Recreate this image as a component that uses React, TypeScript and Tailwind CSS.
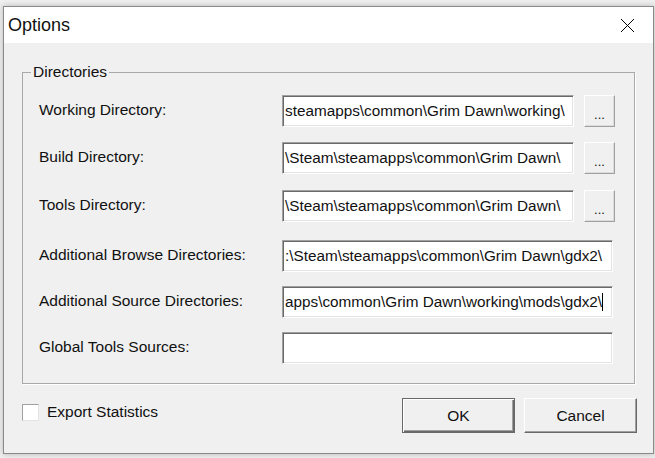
import React from "react";

const rows = [
  { label: "Working Directory:", value: "steamapps\\common\\Grim Dawn\\working\\", browse: true, mt: "mt-[14px]" },
  { label: "Build Directory:", value: "\\Steam\\steamapps\\common\\Grim Dawn\\", browse: true, mt: "mt-[15px]" },
  { label: "Tools Directory:", value: "\\Steam\\steamapps\\common\\Grim Dawn\\", browse: true, mt: "mt-[16px]" },
  { label: "Additional Browse Directories:", value: ":\\Steam\\steamapps\\common\\Grim Dawn\\gdx2\\", browse: false, mt: "mt-[18px]" },
  { label: "Additional Source Directories:", value: "apps\\common\\Grim Dawn\\working\\mods\\gdx2\\", browse: false, mt: "mt-[14px]" },
  { label: "Global Tools Sources:", value: "", browse: false, mt: "mt-[14px]" },
];

const sunken =
  "h-[32px] bg-white border border-t-[#a0a0a0] border-l-[#a0a0a0] border-b-white border-r-white shadow-[inset_1px_1px_0_#696969,inset_-1px_-1px_0_#e3e3e3] overflow-hidden whitespace-nowrap flex items-center pl-[2px] text-[15.3px] text-[#111]";

const App: React.FC = () => {
  return (
    <div className="w-[655px] h-[458px] bg-[#f0f0f0] pt-[6px] pl-[3px] overflow-hidden font-['Liberation_Sans',Arial,sans-serif] text-[#111]">
      <div className="w-[651px] h-[448px] border border-[#8a8a8a] bg-[#f0f0f0] shadow-[0_0_6px_rgba(0,0,0,0.25)] flex flex-col">
        {/* title bar */}
        <div className="h-[36px] bg-white flex items-center justify-between pl-[4px] pr-[18px]">
          <span className="text-[18px] leading-none">Options</span>
          <svg width="15" height="15" viewBox="0 0 15 15" className="mt-[1px]">
            <path d="M1 1 L14 14 M14 1 L1 14" stroke="#000" strokeWidth="1" fill="none" />
          </svg>
        </div>

        <div className="pl-[18px] pr-[18px] pt-[20px]">
          <fieldset className="border border-[#a9a9a9] shadow-[1px_1px_0_#fff] p-0 m-0 min-w-0">
            <legend className="ml-[8px] px-[2px] text-[15.5px] leading-[18px]">Directories</legend>
            <div className="pl-[16px] pb-[19px]">
              {rows.map((r) => (
                <div key={r.label} className={`flex items-center ${r.mt}`}>
                  <div className="w-[243px] text-[15.5px] -mt-[3px]">{r.label}</div>
                  <div className={`${sunken} ${r.browse ? "w-[292px]" : "w-[331px]"}`}>
                    {r.value}
                    {r.label.startsWith("Additional Source") && (
                      <span className="inline-block shrink-0 w-[1px] h-[18px] bg-black" />
                    )}
                  </div>
                  {r.browse && (
                    <button className="ml-[10px] w-[31px] h-[32px] bg-[#f0f0f0] border border-t-white border-l-white border-b-[#a0a0a0] border-r-[#a0a0a0] shadow-[inset_-1px_-1px_0_#dcdcdc] text-[13px] leading-none pt-[6px]">
                      ...
                    </button>
                  )}
                </div>
              ))}
            </div>
          </fieldset>

          <div className="flex items-start mt-[14px]">
            <div className="flex items-center mt-[4px]">
              <div className="w-[17px] h-[17px] bg-white border border-t-[#a0a0a0] border-l-[#a0a0a0] border-b-[#e3e3e3] border-r-[#e3e3e3]" />
              <span className="ml-[8px] text-[15.5px] -mt-[2px]">Export Statistics</span>
            </div>
            <div className="ml-auto flex gap-[9px] -mr-[2px]">
              <button className="w-[113px] h-[35px] bg-[#f0f0f0] border border-[#696969] shadow-[inset_1px_1px_0_#fff,inset_-1px_-1px_0_#696969,inset_-2px_-2px_0_#a0a0a0] text-[15.5px]">
                OK
              </button>
              <button className="w-[113px] h-[35px] bg-[#f0f0f0] border border-t-white border-l-white border-b-[#696969] border-r-[#696969] shadow-[inset_-1px_-1px_0_#a0a0a0] text-[15.5px]">
                Cancel
              </button>
            </div>
          </div>
        </div>
      </div>
    </div>
  );
};

export default App;
